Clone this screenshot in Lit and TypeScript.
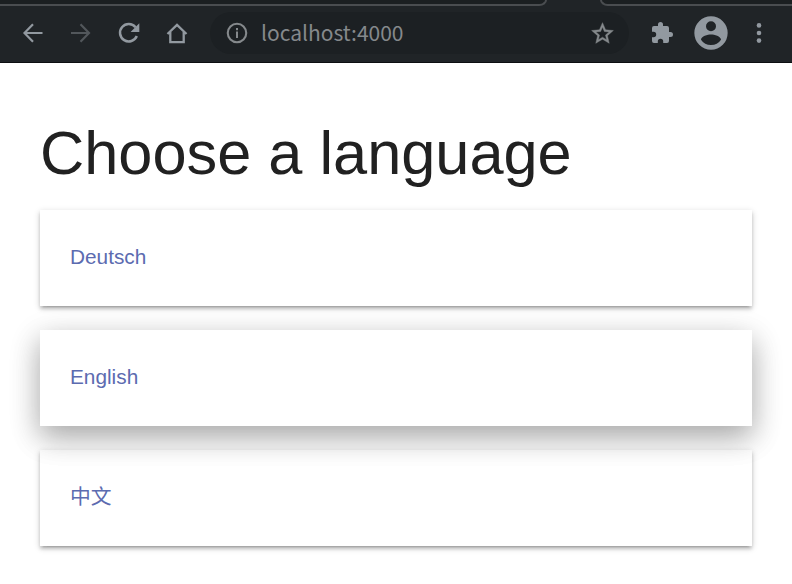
import { LitElement, html, css } from "lit";
import { customElement } from "lit/decorators.js";

@customElement("browser-bar")
class BrowserBar extends LitElement {
  static styles = css`
    :host { display: flex; flex-direction: column; height: 63px; box-sizing: border-box; background: #202427; border-bottom: 1px solid #0d0f11; color: #9299a0; }
    .tabs { height: 6px; display: flex; justify-content: space-between; background: #202427; overflow: hidden; flex: none; }
    .tab { height: 6px; box-sizing: border-box; border-bottom: 2px solid #4a4d50; background: #1b1f21; }
    .left { width: 547px; border-right: 2px solid #4a4d50; border-bottom-right-radius: 9px 7px; }
    .right { width: 192px; border-left: 2px solid #4a4d50; border-bottom-left-radius: 9px 7px; }
    .tools { display: flex; align-items: center; height: 54px; padding-left: 21px; }
    svg { display: block; flex: none; fill: currentColor; }
    .nav { display: flex; gap: 24px; }
    .dim { color: #52575b; }
    .address { display: flex; align-items: center; box-sizing: border-box; width: 419px; height: 42px; margin-left: 21px; padding: 0 14px 0 15px; border-radius: 21px; background: #1c2023; color: #85898c; }
    .url { flex: 1; margin: -3px 0 0 12px; font: 21px/32px "Noto Sans CJK SC", sans-serif; white-space: nowrap; }
    .puzzle { margin-left: 21px; }
    .person { margin-left: 17px; }
    .more { margin-left: 16px; }
  `;
  render() {
    return html`
      <div class="tabs"><div class="tab left"></div><div class="tab right"></div></div>
      <div class="tools">
        <div class="nav">
          <svg width="24" height="24" viewBox="0 0 24 24"><path fill="none" stroke="currentColor" stroke-width="2.200" d="M21.500 12H3.500M12 3.300 3.500 12l8.500 8.700"/></svg>
          <svg class="dim" width="24" height="24" viewBox="0 0 24 24"><path fill="none" stroke="currentColor" stroke-width="2.200" d="M2 12h18M11.500 3.300 20 12l-8.500 8.700"/></svg>
          <svg width="24" height="24" viewBox="0 0 24 24"><path fill="none" stroke="currentColor" stroke-width="2.500" d="M18.500 6.300A8.700 8.700 0 1 0 19.800 15"/><path d="M22.300 2.300V11H13.600z"/></svg>
          <svg width="24" height="24" viewBox="0 0 24 24"><path fill="none" stroke="currentColor" stroke-width="2.300" d="M2.500 13 12 3.800 21.500 13M5.300 11v10.100h13.400V11"/></svg>
        </div>
        <div class="address">
          <svg width="24" height="24" viewBox="0 0 24 24"><path d="M11 7h2v2.200h-2zm0 3.600h2V17h-2zm1-8.900a10.300 10.300 0 1 0 0 20.600 10.300 10.300 0 0 0 0-20.600zm0 18.500a8.200 8.200 0 1 1 0-16.400 8.200 8.200 0 0 1 0 16.400z"/></svg>
          <div class="url">localhost:4000</div>
          <svg width="25" height="25" viewBox="0.500 0.500 23 23"><path stroke="currentColor" stroke-width=".4" d="M22 9.240l-7.190-.62L12 2 9.190 8.630 2 9.240l5.460 4.730L5.820 21 12 17.270 18.180 21l-1.630-7.030zM12 15.400l-3.760 2.270 1-4.280-3.320-2.880 4.380-.38L12 6.100l1.710 4.040 4.380.38-3.320 2.880 1 4.280z"/></svg>
        </div>
        <svg class="puzzle" width="24" height="24" viewBox="0 0 24 24"><path d="M20.500 11H19V7a2 2 0 0 0-2-2h-4V3.500a2.500 2.500 0 0 0-5 0V5H4a2 2 0 0 0-1.990 2v3.800H3.500a2.700 2.700 0 0 1 0 5.400H2V20a2 2 0 0 0 2 2h3.800v-1.500a2.700 2.700 0 0 1 5.400 0V22H17a2 2 0 0 0 2-2v-4h1.500a2.500 2.500 0 0 0 0-5z"/></svg>
        <svg class="person" width="40" height="40" viewBox="0 0 24 24"><path d="M12 2a10 10 0 1 0 0 20 10 10 0 0 0 0-20zm0 3a3 3 0 1 1 0 6 3 3 0 0 1 0-6zm0 14.200A7.200 7.200 0 0 1 6 15.980c.03-1.990 4-3.080 6-3.080 1.990 0 5.970 1.090 6 3.080a7.200 7.200 0 0 1-6 3.220z"/></svg>
        <svg class="more" width="24" height="24" viewBox="0 0 24 24"><circle cx="12" cy="4.400" r="2.300"/><circle cx="12" cy="12" r="2.300"/><circle cx="12" cy="19.600" r="2.300"/></svg>
      </div>`;
  }
}

@customElement("app-root")
class AppRoot extends LitElement {
  static styles = css`
    :host { display: block; height: 584px; overflow: hidden; background: #fff; font-family: "Liberation Sans", "Noto Sans CJK SC", sans-serif; }
    main { padding: 54px 40px 0; }
    h1 { margin: 0; height: 93px; font-size: 61.300px; line-height: 72px; font-weight: 400; color: #212121; white-space: nowrap; }
    .cards { display: flex; flex-direction: column; gap: 24px; }
    .card { height: 96px; box-sizing: border-box; padding: 0 30px; display: flex; align-items: center; background: #fff; color: #5c6bb0; font-size: 20.800px; line-height: 30px; text-decoration: none;
      box-shadow: 0 3px 3px 0 rgba(0,0,0,.14), 0 4.500px 1.500px -3px rgba(0,0,0,.12), 0 1.500px 6.500px 0 rgba(0,0,0,.2); }
    .raised { z-index: 1; box-shadow: 0 12px 27px 0 rgba(0,0,0,.2), 0 9px 32px 0 rgba(0,0,0,.19); }
    .label { margin-top: -2px; }
  `;
  render() {
    return html`
      <browser-bar></browser-bar>
      <main>
        <h1>Choose a language</h1>
        <div class="cards">
          <a class="card"><span class="label">Deutsch</span></a>
          <a class="card raised"><span class="label">English</span></a>
          <a class="card" lang="zh"><span class="label">中文</span></a>
        </div>
      </main>`;
  }
}
